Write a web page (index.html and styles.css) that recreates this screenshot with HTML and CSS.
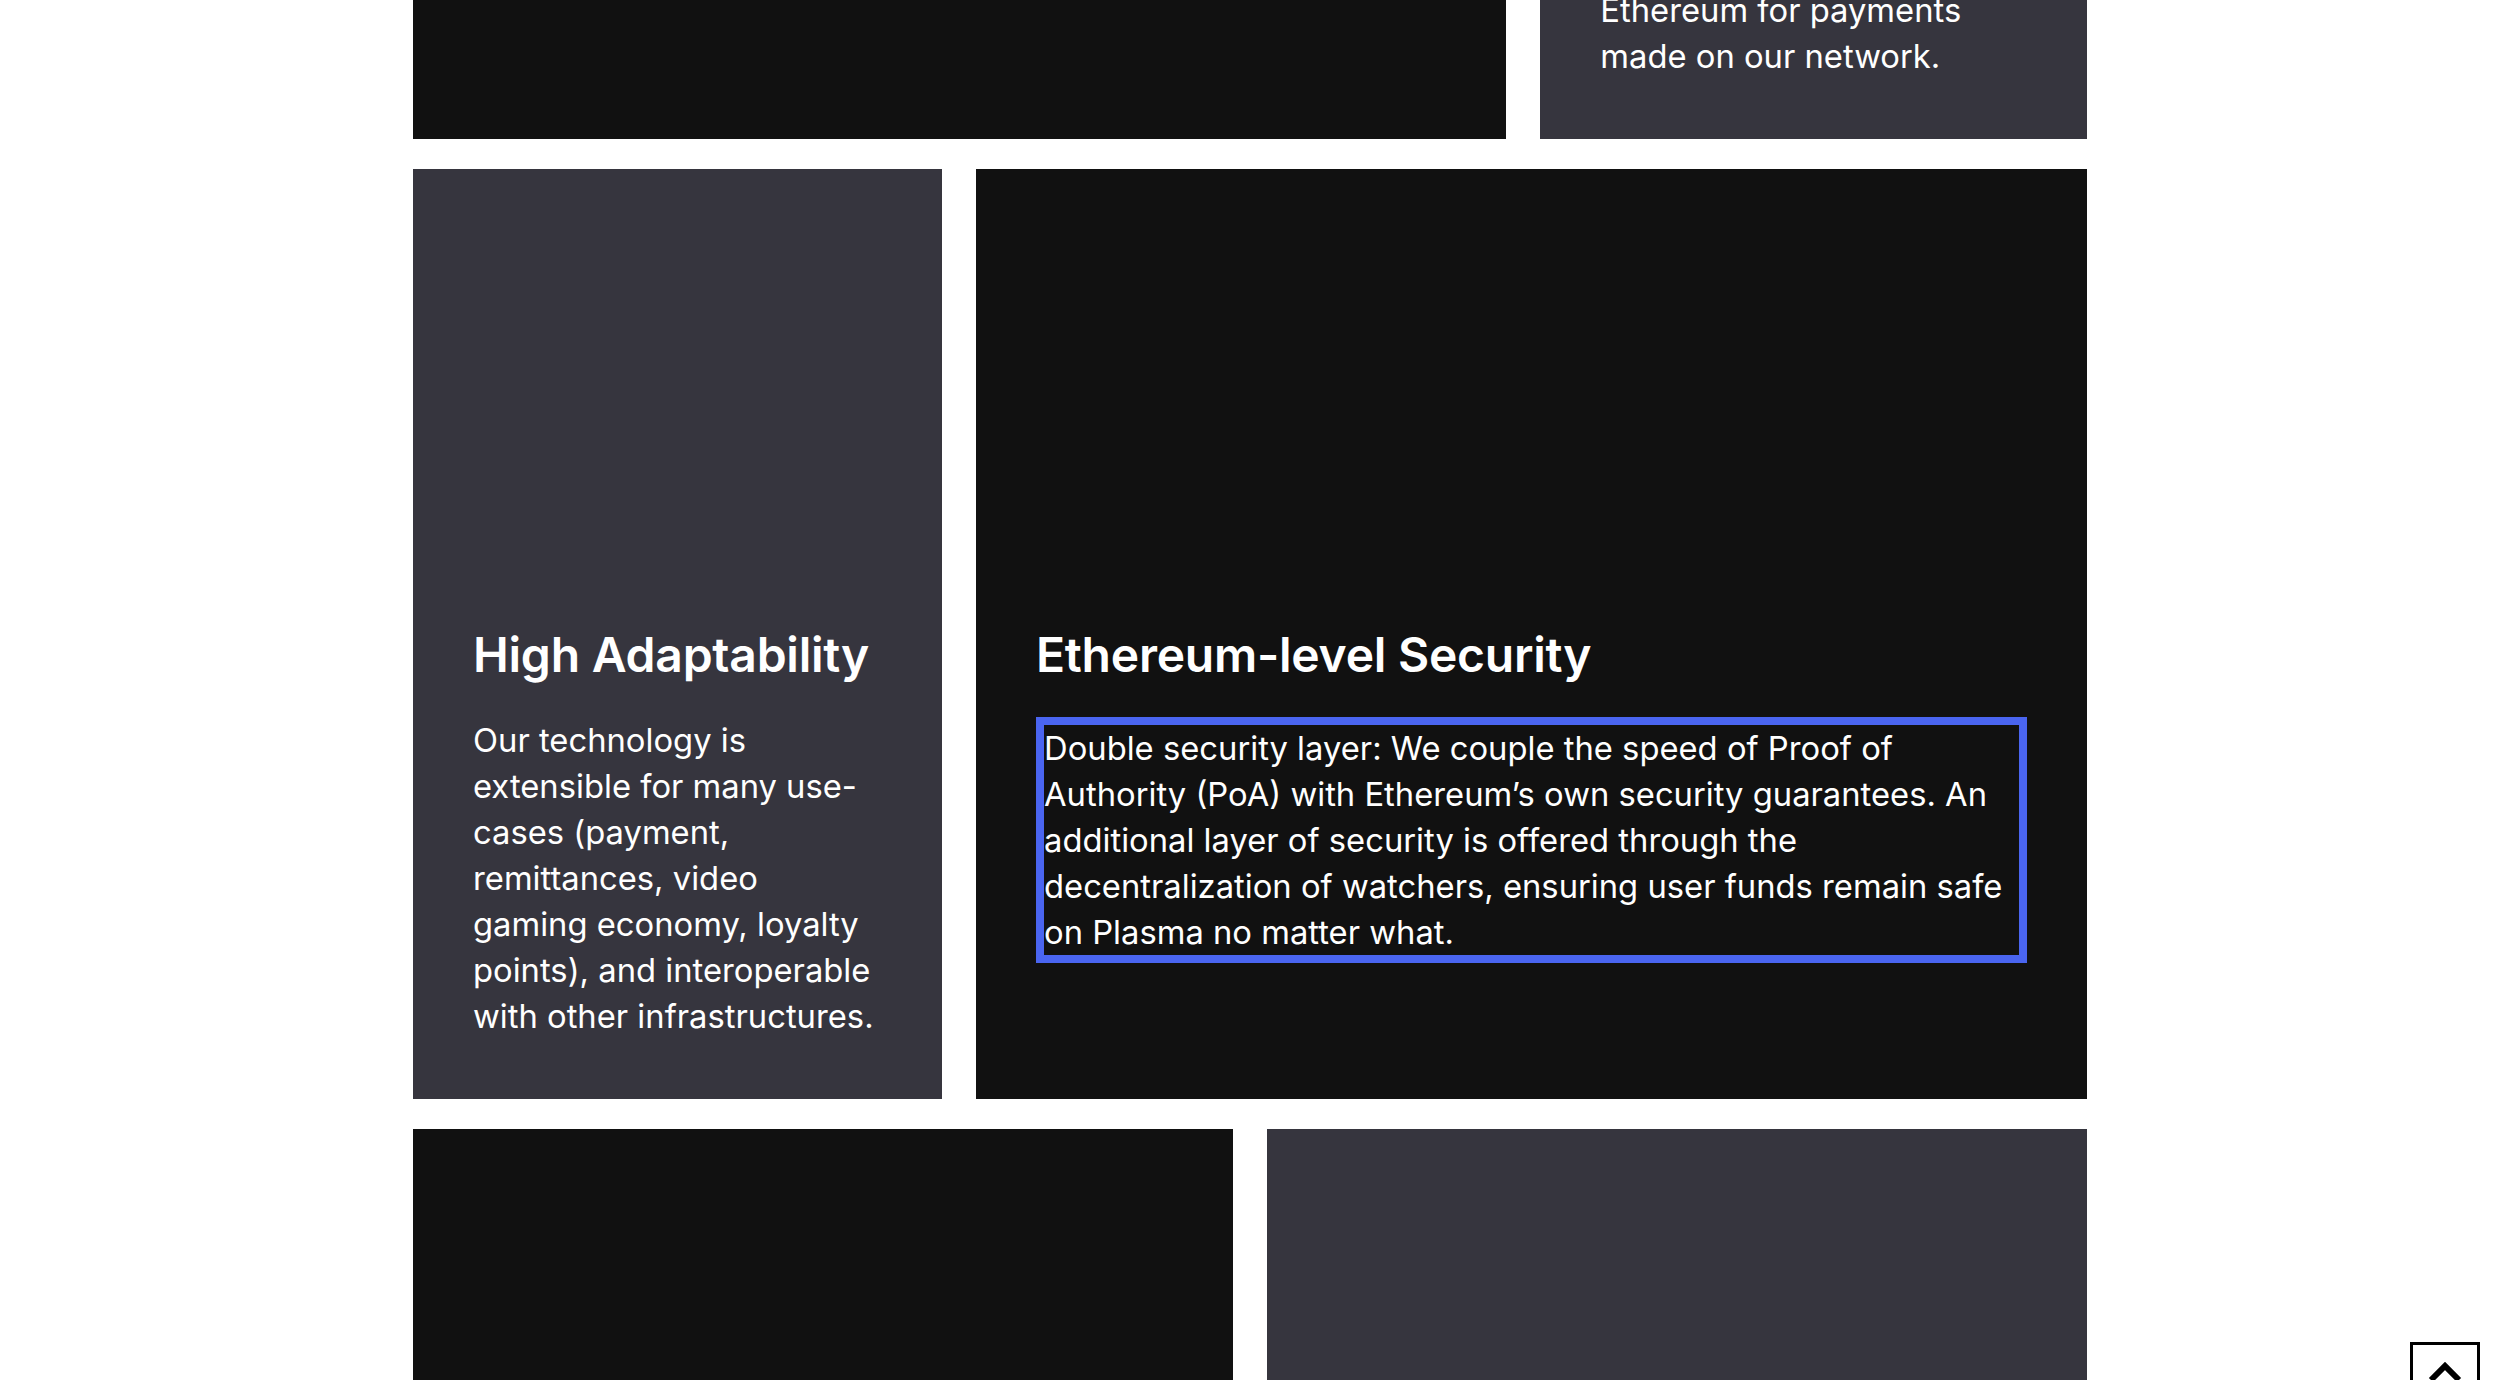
FILE: index.html
```html
<!DOCTYPE html>
<html lang="en">
<head>
<meta charset="utf-8">
<title>Plasma – Features</title>
<link rel="stylesheet" href="styles.css">
</head>
<body>
<main class="features">
  <div class="row row-a">
    <article class="card card-dark"></article>
    <article class="card card-grey card-bottom">
      <p class="card-text">Ethereum for payments made on our network.</p>
    </article>
  </div>

  <div class="row row-b">
    <article class="card card-grey card-narrow">
      <div class="card-media"></div>
      <h3 class="card-title">High Adaptability</h3>
      <p class="card-text">Our technology is extensible for many use-cases (payment, remittances, video gaming economy, loyalty points), and interoperable with other infrastructures.</p>
    </article>
    <article class="card card-dark">
      <div class="card-media"></div>
      <h3 class="card-title">Ethereum-level Security</h3>
      <p class="card-text card-text-focus">Double security layer: We couple the speed of Proof of Authority (PoA) with Ethereum’s own security guarantees. An additional layer of security is offered through the decentralization of watchers, ensuring user funds remain safe on Plasma no matter what.</p>
    </article>
  </div>

  <div class="row row-c">
    <article class="card card-dark"></article>
    <article class="card card-grey"></article>
  </div>
</main>

<a class="to-top" href="#" aria-label="Back to top">
  <svg class="to-top-icon" width="40" height="30" viewBox="0 0 40 30" aria-hidden="true">
    <path d="M6 24 L20 10 L34 24" fill="none" stroke="#000" stroke-width="6" stroke-linejoin="miter"/>
  </svg>
</a>
</body>
</html>
```

FILE: styles.css
```css
html, body {
  margin: 0;
  padding: 0;
  background: #ffffff;
}

body {
  font-family: Inter, "Noto Sans", "Liberation Sans", sans-serif;
  color: #ffffff;
  overflow: hidden;
}

.features {
  width: 1674px;
  margin: -261px auto 0;
  display: flex;
  flex-direction: column;
  gap: 30px;
}

.row {
  display: grid;
  column-gap: 34px;
}

.row-a {
  grid-template-columns: 2fr 1fr;
  min-height: 400px;
}

.row-b {
  grid-template-columns: minmax(0, 529fr) minmax(0, 1111fr);
}

.row-c {
  grid-template-columns: 1fr 1fr;
  height: 600px;
}

.card {
  box-sizing: border-box;
  padding: 60px;
  display: flex;
  flex-direction: column;
}

.card-narrow {
  padding-right: 65px;
}

.card-dark {
  background: #111111;
}

.card-grey {
  background: #36353e;
}

.card-bottom {
  justify-content: flex-end;
}

.card-media {
  flex: none;
  height: 397px;
}

.card-title {
  margin: 0 0 33px;
  font-size: 48px;
  line-height: 58px;
  font-weight: 600;
  letter-spacing: -0.005em;
}

.card-text {
  margin: 0;
  font-size: 32.75px;
  line-height: 46px;
  font-weight: 400;
}

.card-text-focus {
  border: 8px solid #4a65f0;
}

.to-top {
  position: fixed;
  right: 20px;
  bottom: -32px;
  box-sizing: border-box;
  width: 70px;
  height: 70px;
  border: 3px solid #000000;
  background: #ffffff;
  display: flex;
  justify-content: center;
  align-items: flex-start;
  padding-top: 11px;
}

.to-top-icon {
  display: block;
}
```
